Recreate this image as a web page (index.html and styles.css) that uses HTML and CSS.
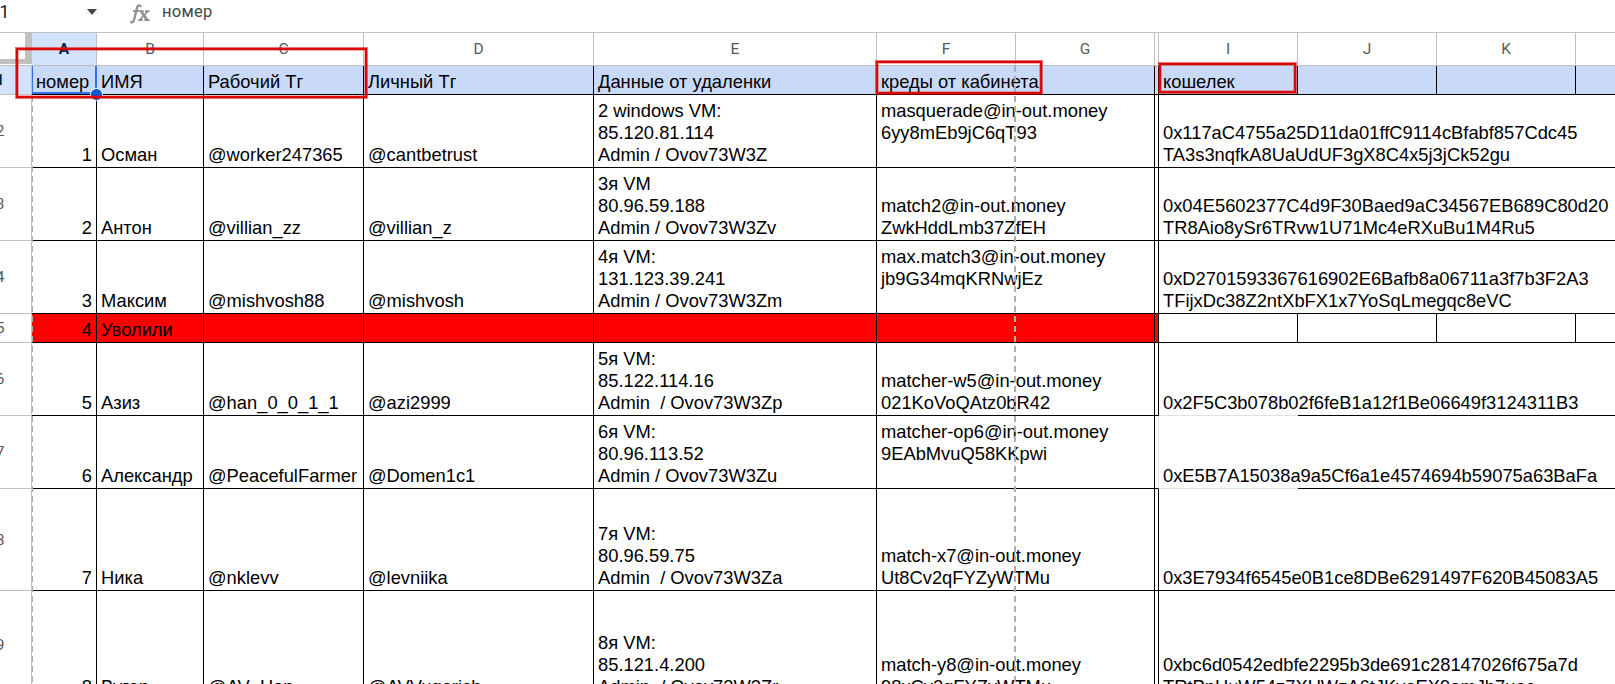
FILE: index.html
```html
<!DOCTYPE html>
<html lang="ru">
<head>
<meta charset="utf-8">
<title>Таблица</title>
<link rel="stylesheet" href="styles.css">
</head>
<body>

<div class="formula-bar">
  <span class="name-box">A1</span>
  <span class="arrow"></span>
  <svg class="fx" width="20" height="20" viewBox="0 0 20 20" fill="none" stroke="#919191">
    <path d="M10.800 3C10.400 .7 7.800 .6 7.100 3.400L4.100 15.700C3.500 18.600 1.400 19.200 .6 17.200" stroke-width="2.300"/>
    <path d="M3 7h6.500" stroke-width="1.900"/>
    <path d="M9.600 7.200h4.200M15 7.200h4.600M8.300 16h4.200M14.300 16h5.200" stroke-width="1.800"/>
    <path d="M11.200 7.400l6 8.600" stroke-width="2.700"/>
    <path d="M17.700 7.400l-8 8.600" stroke-width="1.800"/>
  </svg>
  <span class="formula">номер</span>
</div>

<div class="sheet">
<table class="grid">
  <colgroup>
    <col class="c-head"><col class="c-a"><col class="c-b"><col class="c-c"><col class="c-d"><col class="c-e">
    <col class="c-std"><col class="c-std"><col class="c-h"><col class="c-std"><col class="c-std"><col class="c-std"><col class="c-last">
  </colgroup>
  <tr class="letters">
    <th class="corner"></th><th class="active">A</th><th>B</th><th>C</th><th>D</th><th>E</th><th>F</th><th>G</th><th></th><th>I</th><th>J</th><th>K</th><th></th>
  </tr>
  <tr class="short title">
    <th class="active"><span class="num">1</span></th>
    <td>номер</td><td>ИМЯ</td><td>Рабочий Тг</td><td>Личный Тг</td><td>Данные от удаленки</td>
    <td class="open">креды от кабинета</td><td></td><td></td><td>кошелек</td><td></td><td></td><td></td>
  </tr>
  <tr>
    <th><span class="num">2</span></th>
    <td class="n">1</td><td>Осман</td><td>@worker247365</td><td>@cantbetrust</td>
    <td>2 windows VM:<br>85.120.81.114<br>Admin / Ovov73W3Z</td>
    <td class="open top">masquerade@in-out.money<br>6yy8mEb9jC6qT93</td><td></td><td></td>
    <td class="open">0x117aC4755a25D11da01ffC9114cBfabf857Cdc45<br>TA3s3nqfkA8UaUdUF3gX8C4x5j3jCk52gu</td><td class="open"></td><td class="open"></td><td></td>
  </tr>
  <tr>
    <th><span class="num">3</span></th>
    <td class="n">2</td><td>Антон</td><td>@villian_zz</td><td>@villian_z</td>
    <td>3я VM<br>80.96.59.188<br>Admin / Ovov73W3Zv</td>
    <td class="open">match2@in-out.money<br>ZwkHddLmb37ZfEH</td><td></td><td></td>
    <td class="open">0x04E5602377C4d9F30Baed9aC34567EB689C80d20<br>TR8Aio8ySr6TRvw1U71Mc4eRXuBu1M4Ru5</td><td class="open"></td><td class="open"></td><td></td>
  </tr>
  <tr>
    <th><span class="num">4</span></th>
    <td class="n">3</td><td>Максим</td><td>@mishvosh88</td><td>@mishvosh</td>
    <td>4я VM:<br>131.123.39.241<br>Admin / Ovov73W3Zm</td>
    <td class="open top">max.match3@in-out.money<br>jb9G34mqKRNwjEz</td><td></td><td></td>
    <td class="open">0xD2701593367616902E6Bafb8a06711a3f7b3F2A3<br>TFijxDc38Z2ntXbFX1x7YoSqLmegqc8eVC</td><td class="open"></td><td class="open"></td><td></td>
  </tr>
  <tr class="short fired">
    <th><span class="num">5</span></th>
    <td class="n">4</td><td>Уволили</td><td></td><td></td><td></td><td></td><td></td><td></td>
    <td class="plain"></td><td class="plain"></td><td class="plain"></td><td class="plain"></td>
  </tr>
  <tr>
    <th><span class="num">6</span></th>
    <td class="n">5</td><td>Азиз</td><td>@han_0_0_1_1</td><td>@azi2999</td>
    <td>5я VM:<br>85.122.114.16<br>Admin&nbsp; / Ovov73W3Zp</td>
    <td class="open">matcher-w5@in-out.money<br>021KoVoQAtz0bR42</td><td></td><td></td>
    <td class="open pale-b">0x2F5C3b078b02f6feB1a12f1Be06649f3124311B3</td><td class="open"></td><td class="open"></td><td></td>
  </tr>
  <tr>
    <th><span class="num">7</span></th>
    <td class="n">6</td><td>Александр</td><td>@PeacefulFarmer</td><td>@Domen1c1</td>
    <td>6я VM:<br>80.96.113.52<br>Admin / Ovov73W3Zu</td>
    <td class="open top">matcher-op6@in-out.money<br>9EAbMvuQ58KKpwi</td><td></td><td class="pale-r"></td>
    <td class="open pale-b">0xE5B7A15038a9a5Cf6a1e4574694b59075a63BaFa</td><td class="open"></td><td class="open"></td><td></td>
  </tr>
  <tr class="tall">
    <th><span class="num">8</span></th>
    <td class="n">7</td><td>Ника</td><td>@nklevv</td><td>@levniika</td>
    <td>7я VM:<br>80.96.59.75<br>Admin&nbsp; / Ovov73W3Za</td>
    <td class="open">match-x7@in-out.money<br>Ut8Cv2qFYZyWTMu</td><td></td><td></td>
    <td class="open">0x3E7934f6545e0B1ce8DBe6291497F620B45083A5</td><td class="open"></td><td class="open"></td><td></td>
  </tr>
  <tr class="taller">
    <th><span class="num">9</span></th>
    <td class="n">8</td><td>Вугар</td><td>@AV_Han</td><td>@AVVugarich</td>
    <td>8я VM:<br>85.121.4.200<br>Admin&nbsp; / Ovov73W3Zr</td>
    <td class="open">match-y8@in-out.money<br>98xCv2qFYZyWTMu</td><td></td><td></td>
    <td class="open">0xbc6d0542edbfe2295b3de691c28147026f675a7d<br>TRtPpHuW54z7XUWzA6tJKvaEX9emJb7uac</td><td class="open"></td><td class="open"></td><td></td>
  </tr>
</table>

<!-- print page breaks -->
<div class="page-break first"></div>
<div class="page-break second"></div>

<div class="selection"></div>
<div class="handle"></div>

<div class="mark mark-names"></div>
<div class="mark mark-creds"></div>
<div class="mark mark-wallet"></div>
</div>

</body>
</html>
```
FILE: styles.css
```css
* {
  box-sizing: border-box;
}

body {
  margin: 0;
  width: 1615px;
  height: 684px;
  overflow: hidden;
  background: #fff;
  color: #000;
  font-family: "Liberation Sans", Arial, sans-serif;
}

/* formula bar */
.formula-bar {
  display: flex;
  height: 32px;
  padding-bottom: 9px;
  align-items: center;
  font-family: Roboto, sans-serif;
  font-size: 16.5px;
  color: #444746;
}
.name-box {
  width: 87px;
  font-size: 17.5px;
  text-indent: -12px;
  white-space: nowrap;
  color: #202124;
}
.arrow {
  border: 5.500px solid transparent;
  border-top: 6px solid #444746;
  border-bottom: 0;
}
.fx {
  margin: 4px 0 0 33px;
}
.formula {
  margin-left: 12px;
  letter-spacing: .3px;
}

/* grid */
.sheet {
  position: relative;
}
.grid {
  width: 1615px;
  table-layout: fixed;
  border-spacing: 0;
  font-size: 18.330px;
  line-height: 22px;
}
.c-head { width: 32px; }
.c-a { width: 65px; }
.c-b { width: 107px; }
.c-c { width: 160px; }
.c-d { width: 230px; }
.c-e { width: 283px; }
.c-std { width: 139px; }
.c-h { width: 4px; }
.c-last { width: 39px; }

tr {
  height: 73px;
}
.letters { height: 34px; }
.short { height: 29px; }
.tall { height: 102px; }
.taller { height: 109px; }

th, td {
  padding: 0;
  border-right: 1px solid #000;
  border-bottom: 1px solid #000;
}
td {
  padding: 0 0 1px 4px;
  vertical-align: bottom;
  white-space: nowrap;
}
td.n {
  padding: 0 4px 1px 0;
  text-align: right;
}
td:nth-child(9) {
  padding: 0;
}
td.top {
  padding-bottom: 23px;
}
td.open, td:last-child, th:last-child {
  border-right: 0;
}
td.pale-r {
  border-right-color: #e1e1e1;
}
td.pale-b {
  border-bottom-color: #e1e1e1;
}

th {
  border-color: #c0c0c0;
  font-family: Roboto, sans-serif;
  font-size: 15.500px;
  font-weight: 400;
  color: #575a5a;
}
.letters th {
  border-top: 1px solid #c0c0c0;
}
.letters .corner {
  border-right: 0;
  background:
    linear-gradient(#c0c0c0, #c0c0c0) right top / 7px 31px no-repeat,
    linear-gradient(#c0c0c0, #c0c0c0) left 0 top 26px / 100% 5px no-repeat;
}
th.active {
  background: #d3e3fd;
  font-weight: 700;
  color: #041e49;
}
.num {
  display: block;
  width: 10px;
  margin-left: -5px;
}
.title td {
  background: #c9daf8;
}
.fired td {
  background: #f00;
}
.fired td.plain {
  background: #fff;
}

/* overlays */
.page-break {
  position: absolute;
  top: 34px;
  height: 618px;
  background: repeating-linear-gradient(#adadad 0 6px, transparent 6px 10px);
}
.first {
  left: 32px;
  width: 1px;
}
.second {
  left: 1014px;
  width: 2px;
}
.selection {
  position: absolute;
  left: 32px;
  top: 34px;
  width: 65px;
  height: 28px;
  border: 2px solid #3271ea;
  border-top: 0;
  border-left-width: 1px;
}
.handle {
  position: absolute;
  left: 90px;
  top: 56px;
  width: 13px;
  height: 13px;
  border: 1px solid #fff;
  border-radius: 50%;
  background: #0b57d0;
}
.mark {
  position: absolute;
  border: 2px solid #dc0808;
  box-shadow: 0 0 0 1px rgba(220, 8, 8, .55), inset 0 0 0 1px rgba(220, 8, 8, .3);
}
.mark-names {
  left: 16px;
  top: 16px;
  width: 351px;
  height: 50px;
}
.mark-creds {
  left: 876px;
  top: 29px;
  width: 166px;
  height: 33px;
}
.mark-wallet {
  left: 1159px;
  top: 31px;
  width: 137px;
  height: 30px;
}
```
